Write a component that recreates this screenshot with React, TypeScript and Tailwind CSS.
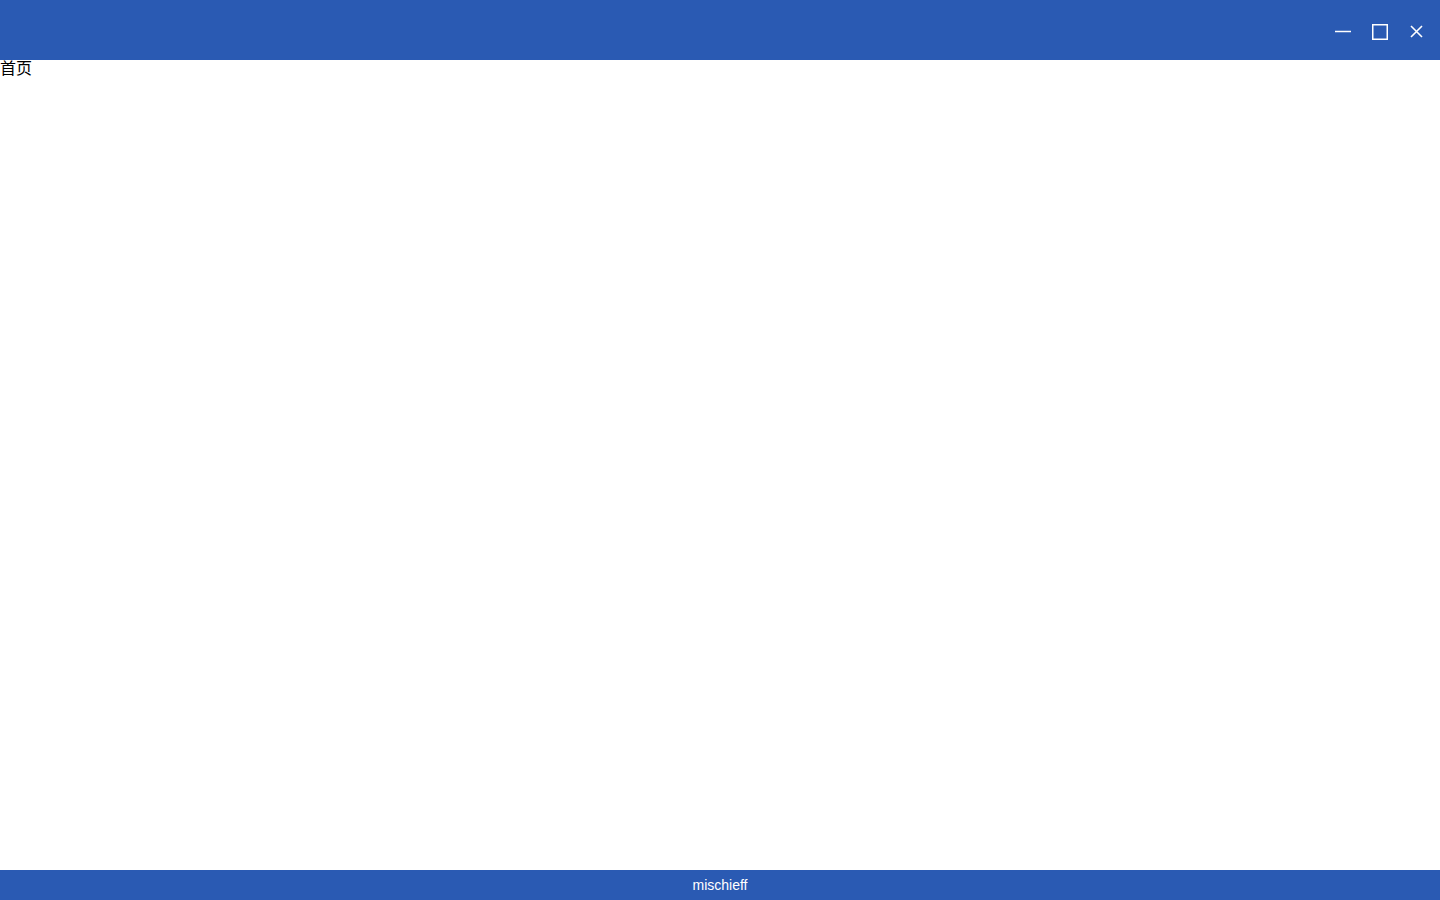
export default function App() {
  return (
    <div className="flex h-screen w-full flex-col bg-white font-['Liberation_Sans','Noto_Sans_CJK_SC',sans-serif]">
      {/* Title bar */}
      <div className="flex h-[60px] shrink-0 items-center justify-end bg-[#2a5ab3] pr-[6px]">
        <div className="flex items-center gap-[2px] pt-[3px]">
          <button className="flex h-8 w-[35px] items-center justify-center text-white" title="Minimize">
            <svg width="16" height="16" viewBox="0 0 16 16" fill="none" stroke="currentColor" strokeWidth={1.5}>
              <path d="M0 7.5h16" />
            </svg>
          </button>
          <button className="flex h-8 w-[35px] items-center justify-center text-white" title="Maximize">
            <svg width="16" height="16" viewBox="0 0 16 16" fill="none" stroke="currentColor" strokeWidth={1.5}>
              <rect x="0.75" y="0.75" width="14.5" height="14.5" />
            </svg>
          </button>
          <button className="flex h-8 w-[35px] items-center justify-center text-white" title="Close">
            <svg width="13" height="13" viewBox="0 0 13 13" fill="none" stroke="currentColor" strokeWidth={1.6}>
              <path d="M1 1l11 11M12 1L1 12" />
            </svg>
          </button>
        </div>
      </div>

      {/* Content */}
      <div className="flex-1 text-base leading-[16px] text-black">
        <div className="pt-[1px]">首页</div>
      </div>

      {/* Footer */}
      <div className="flex h-[30px] shrink-0 items-center justify-center bg-[#2a5ab3] pt-[1px] text-[14px] text-white">
        mischieff
      </div>
    </div>
  );
}
